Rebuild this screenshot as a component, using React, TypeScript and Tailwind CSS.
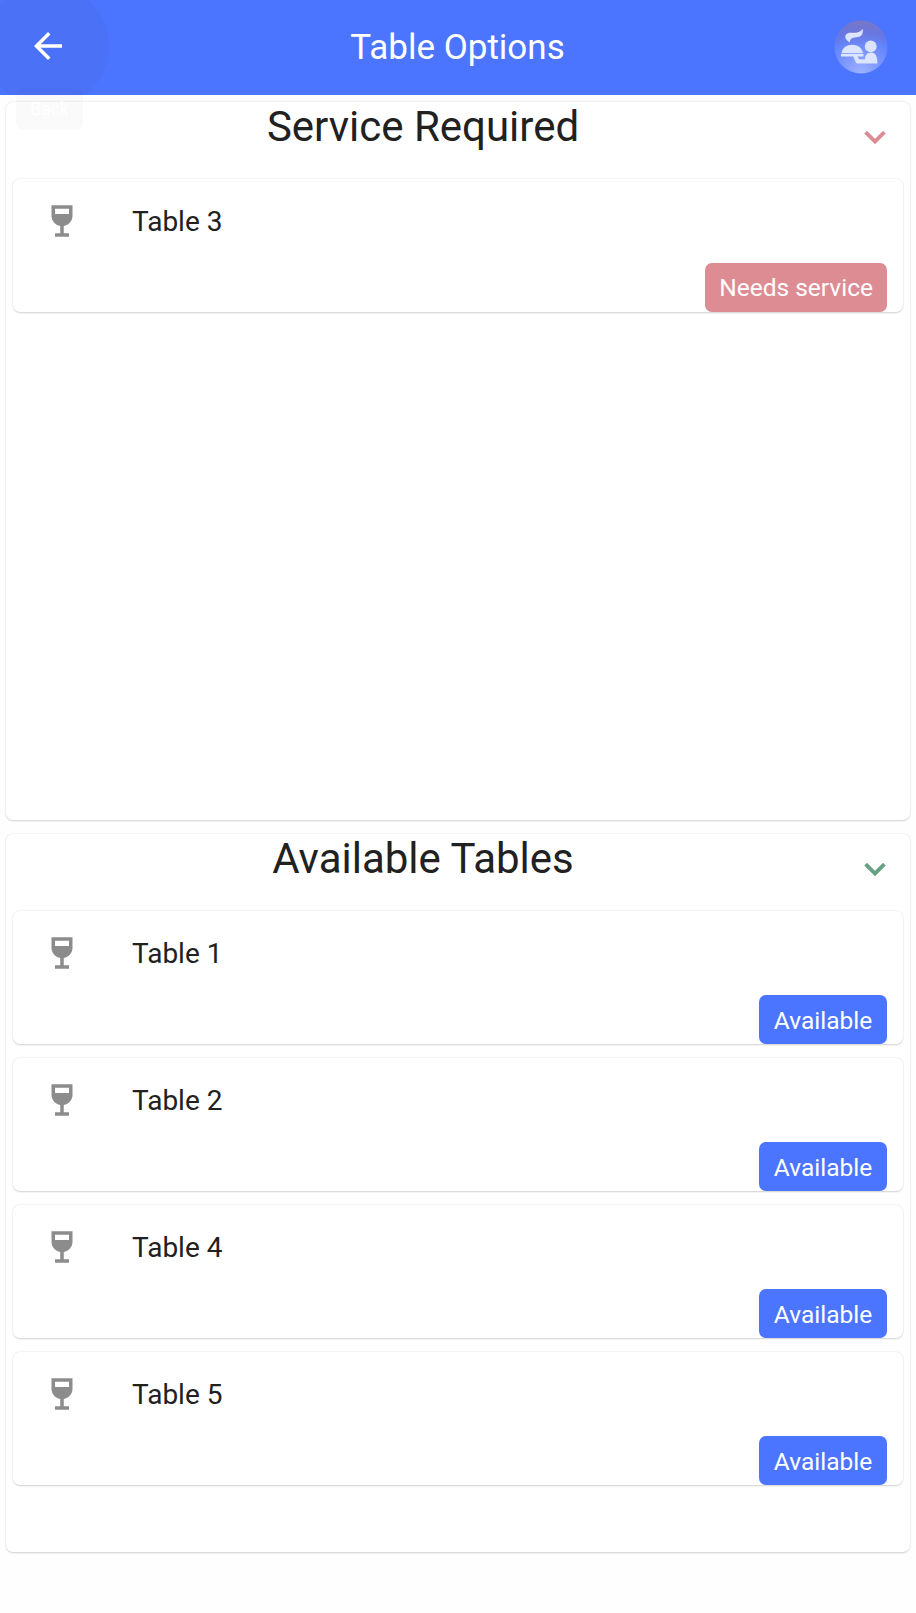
function Wine() {
  return (
    <svg viewBox="0 0 24 24" className="h-[42px] w-[42px] shrink-0 fill-[#8c8c8c]">
      <path d="M6 3v6c0 2.97 2.16 5.43 5 5.91V19H8v2h8v-2h-3v-4.09c2.84-.48 5-2.94 5-5.91V3H6zm10 5H8V5h8v3z" />
    </svg>
  );
}

const cardShadow =
  "rounded-[7px] bg-white shadow-[0_2px_2px_-1px_rgba(0,0,0,0.08),0_1px_2px_rgba(0,0,0,0.07),0_0_2px_rgba(0,0,0,0.15)]";

function TableCard({ name, status, alert }: { name: string; status: string; alert?: boolean }) {
  return (
    <div className={`flex h-[133px] flex-col justify-between pr-4 ${cardShadow}`}>
      <div className="flex items-start pt-[20.75px] pl-7">
        <Wine />
        <span className="ml-[49px] pt-[1.25px] text-[28px] leading-[42px]">{name}</span>
      </div>
      <div
        className={`flex h-[49px] min-w-[128px] items-center justify-center self-end rounded-[7px] px-[14px] text-[24.5px] text-white ${alert ? "bg-[#dd8c93] pt-px" : "bg-[#4c75ff] pt-[3px]"}`}
      >
        {status}
      </div>
    </div>
  );
}

function Section({ title, chevron, tables }: { title: string; chevron: string; tables: { name: string; status: string; alert?: boolean }[] }) {
  return (
    <section className={`h-[718px] px-[7px] ${cardShadow}`}>
      <div className="flex h-[77px]">
        <h2 className="flex-1 pr-[21px] text-center text-[42px] leading-[49px]">{title}</h2>
        <svg viewBox="0 0 24 24" className={`mt-[14px] mr-[7px] h-[42px] w-[42px] ${chevron}`}>
          <path d="M7.41 8.59 12 13.17l4.59-4.58L18 10l-6 6-6-6z" strokeWidth="0.25" className="stroke-current" />
        </svg>
      </div>
      <div className="flex flex-col gap-[14px]">
        {tables.map((t) => (
          <TableCard key={t.name} {...t} />
        ))}
      </div>
    </section>
  );
}

export default function App() {
  return (
    <div className="h-[1613px] w-[916px] overflow-hidden bg-[#fefefe] font-['Roboto',sans-serif] text-[#212121]">
      <header className="relative flex h-[95px] items-center justify-between overflow-hidden bg-[#4c75ff] pr-7 pl-[27px] text-white">
        <div className="absolute top-[-16px] left-[-15px] h-[124px] w-[124px] rounded-full bg-[#4b71f6]" />
        <svg viewBox="0 0 24 24" className="relative mb-[3px] h-[42px] w-[42px] fill-white">
          <path d="M20 11H7.83l5.59-5.59L12 4l-8 8 8 8 1.41-1.41L7.83 13H20v-2z" />
        </svg>
        <h1 className="ml-[12px] pt-[2px] text-[35px]">Table Options</h1>
        <svg viewBox="0 0 54 54" className="mb-[2px] h-[54px] w-[54px]">
          <defs>
            <linearGradient id="logo-top" x1="0" y1="0" x2="0" y2="1">
              <stop offset="0" stopColor="#7b76c4" />
              <stop offset="0.5" stopColor="#7b76c4" stopOpacity="0" />
            </linearGradient>
            <radialGradient id="logo-glow" cx="0.5" cy="1" r="0.85">
              <stop offset="0" stopColor="#9db2ff" />
              <stop offset="0.5" stopColor="#7894ff" />
              <stop offset="1" stopColor="#5277fc" />
            </radialGradient>
          </defs>
          <circle cx="27" cy="27" r="26.500" fill="url(#logo-glow)" />
          <circle cx="27" cy="27" r="26.500" fill="url(#logo-top)" />
          <g fill="#dde4ff">
            <path d="M16 22.500C11.500 20 10 16.500 12.500 14 15 11.500 19 13.500 23 12.500 26 11.800 27.500 10.500 28.500 8.400 29.500 13 28 16 24 17 19.500 18 15.500 17.500 16 22.500z" />
            <path d="M7.500 33C8.500 27.500 13 24.700 18.200 24.700S28 27.500 29 33zM7 33.800H29.500V36.500H7z" />
            <circle cx="36.700" cy="26.400" r="5.900" />
            <path d="M19 36H23.500L25 39.200H31C31 35.500 33 32.600 37.200 32.600S43.400 36 43.400 43.600H24.500C21 43.600 21 39.500 19 36z" />
          </g>
        </svg>
      </header>
      <main className="flex flex-col gap-[14px] px-[6px] pt-[7px]">
        <Section title="Service Required" chevron="fill-[#dd8c93] text-[#dd8c93]" tables={[{ name: "Table 3", status: "Needs service", alert: true }]} />
        <Section
          title="Available Tables"
          chevron="fill-[#66a182] text-[#66a182]"
          tables={["1", "2", "4", "5"].map((n) => ({ name: `Table ${n}`, status: "Available" }))}
        />
      </main>
      <div className="absolute top-[88px] left-[16px] flex h-[42px] w-[67px] items-center justify-center rounded-[7px] bg-black/[0.018] text-[17.5px] text-white">
        Back
      </div>
    </div>
  );
}
